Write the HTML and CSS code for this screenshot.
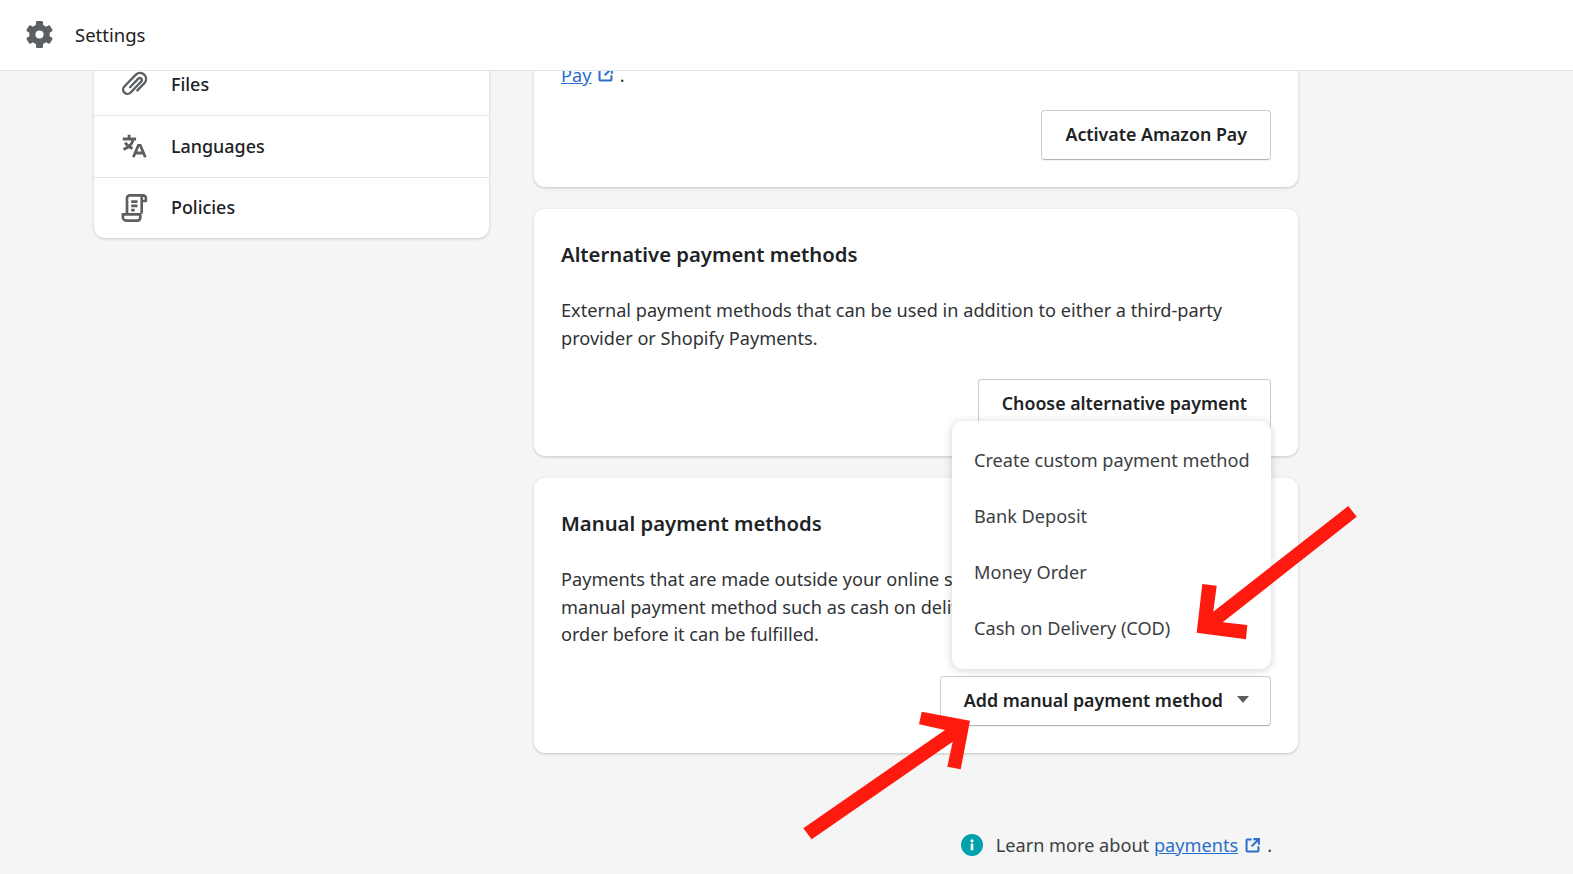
FILE: index.html
```html
<!DOCTYPE html>
<html lang="en">
<head>
    <meta charset="UTF-8">
    <meta name="viewport" content="width=device-width, initial-scale=1.0">
    <title>Settings</title>
    <link rel="stylesheet" href="styles.css">
</head>
<body>
    <header class="topbar">
      <svg class="topbar-icon" viewBox="0 0 20 20" aria-hidden="true">
        <g fill="#5c5f62">
          <rect x="7.4" y="0" width="5.2" height="20" rx="1"/>
          <rect x="7.4" y="0" width="5.2" height="20" rx="1" transform="rotate(60 10 10)"/>
          <rect x="7.4" y="0" width="5.2" height="20" rx="1" transform="rotate(120 10 10)"/>
          <circle cx="10" cy="10" r="7.6"/>
        </g>
        <circle cx="10" cy="10" r="3" fill="#ffffff"/>
      </svg>
      <span class="topbar-title">Settings</span>
    </header>

    <main class="page">
      <nav class="side-nav">
        <a class="side-nav-item" href="#">
          <svg class="side-nav-icon" viewBox="0 0 20 20" aria-hidden="true">
            <path d="M7.2 12.300l6-6.300a1.500 1.500 0 0 1 2.100 2.100l-7.700 8a3.100 3.100 0 0 1-4.500-4.300l8.400-8.600a4.300 4.300 0 0 1 6.200 5.900l-5.300 5.500" fill="none" stroke="#5c5f62" stroke-width="1.700" stroke-linecap="round"/>
          </svg>
          Files
        </a>
        <a class="side-nav-item" href="#">
          <svg class="side-nav-icon" viewBox="0 0 20 20" aria-hidden="true">
            <path d="M2 5h9.500M6.500 2v3M9.500 5c-.6 3.400-3.300 6-7 7.500M3.800 7.500c1 2 3 3.500 5.200 4.200M9.500 18l3.600-8.500h1.400l3.600 8.500M11 15h5.600" fill="none" stroke="#5c5f62" stroke-width="2"/>
          </svg>
          Languages
        </a>
        <a class="side-nav-item" href="#">
          <svg class="side-nav-icon" viewBox="0 0 20 20" aria-hidden="true">
            <path d="M16.500 1H7a2 2 0 0 0-2 2v11.500M16.500 1a2 2 0 0 1 2 2v2h-3V3a2 2 0 0 1 1-2M15.500 4v10M12.500 14.500H2v2A2.500 2.500 0 0 0 4.500 19h8a2 2 0 0 0 2-2v-2.500h-2zM8 5.500h4.500M8 8.500h4.500M8 11.500h2.500" fill="none" stroke="#5c5f62" stroke-width="1.900" stroke-linejoin="round"/>
          </svg>
          Policies
        </a>
      </nav>

      <div class="settings">
        <section class="card card-first">
          <p class="card-text">
            <a class="link" href="#">Pay</a>
            <svg class="link-icon" viewBox="0 0 20 20" aria-hidden="true">
              <path d="M9 3H4a1 1 0 0 0-1 1v12a1 1 0 0 0 1 1h12a1 1 0 0 0 1-1v-5M11 2.500h6.500V9M17 3l-8 8" fill="none" stroke="#2c6ecb" stroke-width="2.400"/>
            </svg>
            .
          </p>
          <div class="card-actions">
            <button class="btn" type="button">Activate Amazon Pay</button>
          </div>
        </section>

        <section class="card">
          <h2 class="card-title">Alternative payment methods</h2>
          <p class="card-text">External payment methods that can be used in addition to either a third-party provider or Shopify Payments.</p>
          <div class="card-actions">
            <button class="btn" type="button">Choose alternative payment</button>
          </div>
        </section>

        <section class="card">
          <h2 class="card-title">Manual payment methods</h2>
          <p class="card-text">Payments that are made outside your online store. When a customer selects a manual payment method such as cash on delivery, you'll need to approve their order before it can be fulfilled.</p>
          <div class="card-actions">
            <div class="dropdown">
              <ul class="dropdown-menu">
                <li class="dropdown-item">Create custom payment method</li>
                <li class="dropdown-item">Bank Deposit</li>
                <li class="dropdown-item">Money Order</li>
                <li class="dropdown-item">Cash on Delivery (COD)</li>
              </ul>
              <button class="btn" type="button">
                Add manual payment method
                <span class="btn-caret"></span>
              </button>
            </div>
          </div>
        </section>

        <p class="help">
          <svg class="help-icon" viewBox="0 0 22 22" aria-hidden="true">
            <circle cx="11" cy="11" r="11" fill="#00a0ac"/>
            <circle cx="11" cy="6.800" r="1.600" fill="#ffffff"/>
            <rect x="9.700" y="9.500" width="2.600" height="6.800" rx="0.600" fill="#ffffff"/>
          </svg>
          <span>Learn more about <a class="link" href="#">payments</a></span>
          <svg class="link-icon" viewBox="0 0 20 20" aria-hidden="true">
            <path d="M9 3H4a1 1 0 0 0-1 1v12a1 1 0 0 0 1 1h12a1 1 0 0 0 1-1v-5M11 2.500h6.500V9M17 3l-8 8" fill="none" stroke="#2c6ecb" stroke-width="2.400"/>
          </svg>
          <span>.</span>
        </p>
      </div>
    </main>

    <svg class="annotations" viewBox="0 0 1573 874" aria-hidden="true">
      <polygon points="1348.300,506 1356.700,516.700 1222.700,622.300 1247.300,625 1246,639.300 1196.700,632.700 1202.300,584 1216.700,585.700 1213.300,611.700"/>
      <polygon points="970,720.700 921.700,711.700 919,724.300 945,730 803.300,828.300 811.700,839.300 952.700,741.700 947.300,766.700 960.700,769.300"/>
    </svg>
</body>
</html>
```

FILE: styles.css
```css
html,
body {
  height: 100%;
}

body {
  position: relative;
  display: flex;
  flex-direction: column;
  margin: 0;
  overflow: hidden;
  font-size: 18.15px;
  line-height: 27.5px;
  font-family: "Noto Sans", sans-serif;
  color: #202223;
  background-color: #f5f5f5;
}

.topbar {
  position: relative;
  z-index: 2;
  display: flex;
  flex-shrink: 0;
  align-items: center;
  box-sizing: border-box;
  height: 71px;
  padding-left: 26px;
  background-color: #ffffff;
  border-bottom: 1px solid #e3e4e5;
}

.topbar-icon {
  width: 27px;
  height: 27px;
  margin-right: 22px;
  margin-top: -2px;
}

.topbar-title {
  font-size: 18.5px;
}

.page {
  display: flex;
  align-items: flex-start;
  gap: 45px;
  padding-left: 94px;
}

.side-nav {
  display: flex;
  flex-direction: column;
  flex-shrink: 0;
  width: 395px;
  margin-top: -17.500px;
  background-color: #ffffff;
  border-radius: 11px;
  box-shadow: 0 1px 3px rgba(23, 24, 24, 0.2);
}

.side-nav-item {
  display: flex;
  align-items: center;
  box-sizing: border-box;
  height: 61.5px;
  padding-left: 26px;
  font-size: 17.9px;
  font-weight: 500;
  color: #202223;
  text-decoration: none;
}

.side-nav-item + .side-nav-item {
  border-top: 1px solid #e3e4e5;
}

.side-nav-icon {
  width: 28px;
  height: 28px;
  margin-right: 23px;
}

.settings {
  display: flex;
  flex-direction: column;
  gap: 22px;
  width: 764px;
}

.card {
  padding: 27px;
  background-color: #ffffff;
  border-radius: 11px;
  box-shadow: 0 1px 3px rgba(23, 24, 24, 0.22);
}

.card-first {
  margin-top: -36px;
}

.card-first .card-actions {
  margin-top: 20.500px;
}

.card-title {
  margin: 0 0 25px;
  font-size: 20.3px;
  line-height: 36px;
  font-weight: 600;
}

.card-text {
  margin: 0;
  color: #303335;
}

.card-actions {
  display: flex;
  justify-content: flex-end;
  margin-top: 27px;
}

.btn {
  display: flex;
  align-items: center;
  box-sizing: border-box;
  height: 50px;
  padding: 0 23px;
  font: inherit;
  font-size: 17.8px;
  font-weight: 600;
  color: #202223;
  background-color: #ffffff;
  border: 1px solid #c4cdd5;
  border-bottom-color: #b1b5b9;
  border-radius: 4px;
  box-shadow: 0 1px 0 rgba(0, 0, 0, 0.05);
  cursor: pointer;
}

.btn-caret {
  width: 0;
  height: 0;
  margin-left: 14px;
  margin-right: -2px;
  margin-top: -2px;
  border-top: 7px solid #5c5f62;
  border-left: 6px solid transparent;
  border-right: 6px solid transparent;
}

.dropdown {
  position: relative;
}

.dropdown-menu {
  position: absolute;
  right: 0;
  bottom: calc(100% + 7px);
  z-index: 1;
  box-sizing: border-box;
  width: 319px;
  margin: 0;
  padding: 12px 0;
  list-style: none;
  background-color: #ffffff;
  border-radius: 11px;
  box-shadow: 0 1px 8px rgba(23, 24, 24, 0.2);
}

.dropdown-item {
  padding: 14px 22px 14.500px;
  white-space: nowrap;
  color: #3c4043;
}

.link {
  color: #2c6ecb;
}

.link-icon {
  width: 17px;
  height: 17px;
  margin: 0 1px;
  vertical-align: -1px;
}

.help {
  display: flex;
  align-items: center;
  justify-content: flex-end;
  gap: 5px;
  margin: 57px 26px 0 0;
  color: #3c4043;
}

.help-icon {
  width: 22px;
  height: 22px;
  margin-right: 8px;
}

.annotations {
  position: absolute;
  top: 0;
  left: 0;
  z-index: 3;
  width: 1573px;
  height: 874px;
  fill: #ff1a0f;
  pointer-events: none;
}
```
